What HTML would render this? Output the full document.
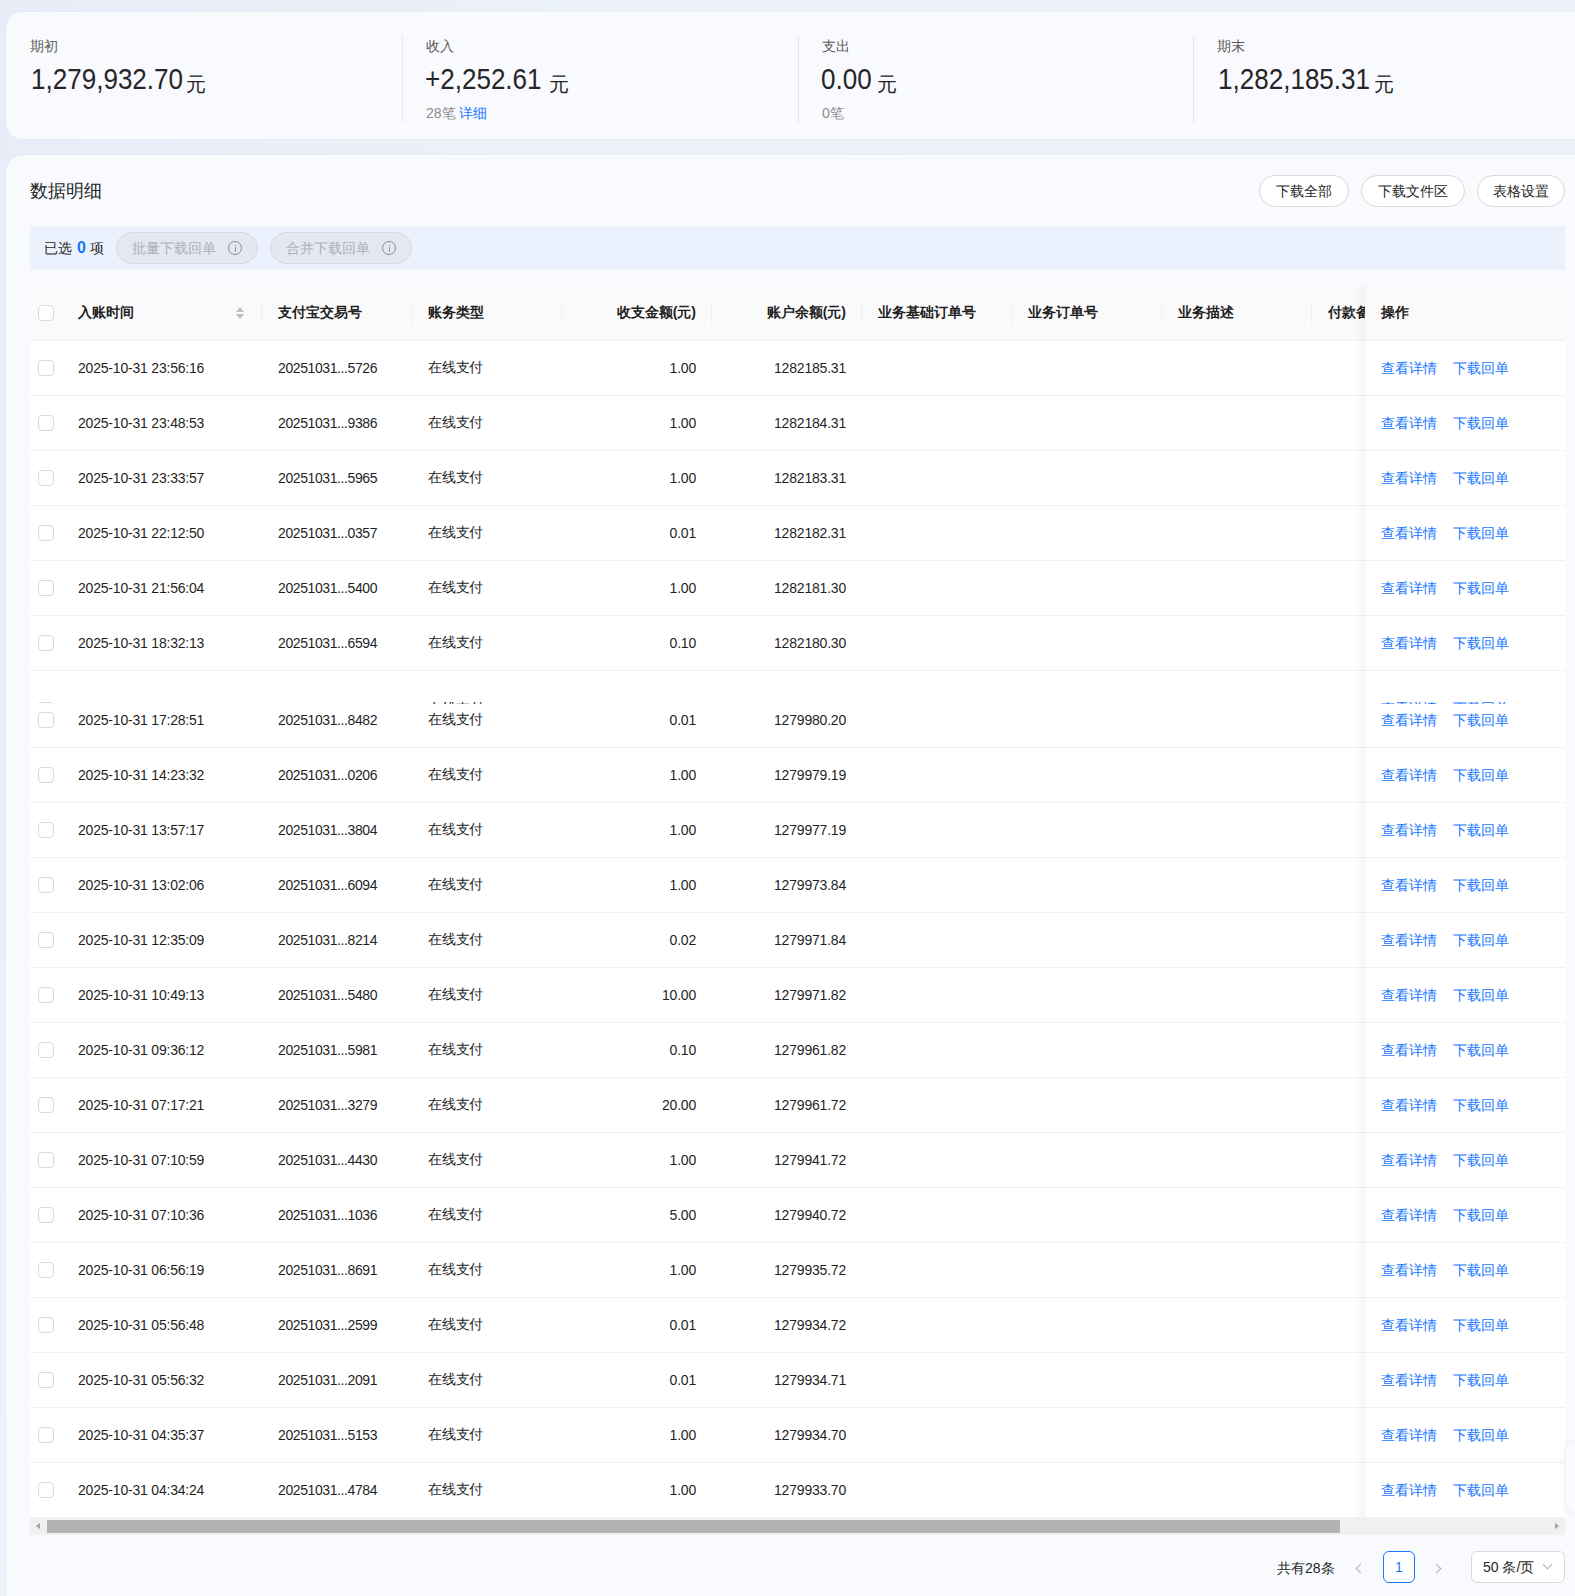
<!DOCTYPE html>
<html><head><meta charset="utf-8">
<style>
*{box-sizing:border-box;margin:0;padding:0}
html,body{width:1575px;height:1596px;overflow:hidden}
body{font-family:"Liberation Sans",sans-serif;color:#1f1f1f;background:linear-gradient(180deg,rgba(238,243,252,0) 0,rgba(238,243,252,0.8) 100%),linear-gradient(90deg,#e9ecf7 0%,#ebf1f8 35%,#edf1f8 65%,#eef0f9 100%);position:relative}
.abs{position:absolute}
.card{position:absolute;left:6px;width:1640px;background:#f9fafe;border-radius:16px;box-shadow:0 0 1px rgba(60,70,120,0.12)}
.card1{top:12px;height:127px}
.card2{top:155px;height:1500px}
.lbl{position:absolute;top:38px;font-size:14px;line-height:16px;color:#595959;white-space:nowrap}
.num{position:absolute;top:62px;font-size:30px;line-height:34px;color:#262626;white-space:nowrap;transform-origin:0 0;transform:scaleX(0.868)}
.yuan{position:absolute;top:73px;font-size:20px;line-height:22px;color:#262626}
.sub{position:absolute;top:105px;font-size:14px;line-height:16px;color:#8c8c8c;white-space:nowrap}
.sub a{color:#1677ff;margin-left:3px}
.vdiv{position:absolute;top:36px;height:87px;width:1px;background:#e8e8e8}
.title{position:absolute;left:30px;top:180px;font-size:18px;line-height:22px;color:#262626}
.btn{position:absolute;top:175px;height:32px;border:1px solid #d9d9d9;border-radius:16px;background:#fff;font-size:14px;line-height:30px;text-align:center;color:#1f1f1f}
.bar{position:absolute;left:30px;top:226px;width:1535px;height:44px;background:#ecf2fd}
.sel{position:absolute;left:44px;top:240px;font-size:14px;line-height:16px;color:#262626;white-space:nowrap}
.sel b{color:#1677ff;font-weight:bold;font-size:16px;margin:0 4px 0 5px}
.pill{position:absolute;top:232px;height:32px;width:142px;border:1px solid #d6d9de;border-radius:16px;background:#e3e8f2;font-size:14px;line-height:30px;color:#acb1bb;padding-left:15px;white-space:nowrap}
.pill i{position:absolute;right:15px;top:8px;width:14px;height:14px;border:1px solid #8f8f8f;border-radius:50%}
.pill i:before{content:"";position:absolute;left:5.5px;top:2.5px;width:1.5px;height:1.5px;background:#8f8f8f}
.pill i:after{content:"";position:absolute;left:5.5px;top:5px;width:1.5px;height:5px;background:#8f8f8f}
.table{position:absolute;left:30px;top:286px;width:1535px;height:1231px;overflow:hidden}
.thead{position:relative;height:55px;background:#fafafa;border-bottom:1px solid #f0f0f0;border-radius:8px 8px 0 0}
.row{position:relative;height:55px;border-bottom:1px solid #f0f0f0;background:#fff}
.row.tall{height:77px}
.cell{position:absolute;top:0;height:54px;display:flex;align-items:center;padding:0 16px;font-size:14px;letter-spacing:-0.2px;white-space:nowrap;overflow:hidden;color:#1f1f1f}
.tall .cell{top:22px}
.thead .cell{font-weight:bold;color:#1f1f1f;letter-spacing:0}
.c-cb{left:0;width:32px;padding:0}
.c-time{left:32px;width:200px}
.c-tx{left:232px;width:150px;letter-spacing:-0.4px}
.c-type{left:382px;width:150px}
.c-amt{left:532px;width:150px;justify-content:flex-end}
.c-bal{left:682px;width:150px;justify-content:flex-end}
.c-e1{left:832px;width:150px}
.c-e2{left:982px;width:150px}
.c-e3{left:1132px;width:150px}
.c-e4{left:1282px;width:150px}
.c-op{left:1335px;width:200px;background:#fff}
.thead .c-op{background:#fafafa}
.c-op a{color:#1677ff;margin-right:16px;position:relative;top:1px}
.c-op{letter-spacing:0}
.shadow{position:absolute;left:1325px;top:0;width:10px;height:1231px;background:linear-gradient(90deg,rgba(0,0,0,0),rgba(0,0,0,0.038));z-index:5}
.tall .c-op{top:0;height:76px;padding-top:22px}
.cb{position:absolute;left:8px;top:19px;width:16px;height:16px;border:1px solid #d9d9d9;border-radius:4px;background:#fff}
.hdiv{position:absolute;top:16px;width:1px;height:22px;background:#f0f0f0}
.sort{position:absolute;left:206px;top:21px;width:8px;height:12px}
.sort:before{content:"";position:absolute;left:0;top:0;border-left:4px solid transparent;border-right:4px solid transparent;border-bottom:5px solid #bfbfbf}
.sort:after{content:"";position:absolute;left:0;top:7px;border-left:4px solid transparent;border-right:4px solid transparent;border-top:5px solid #bfbfbf}
.frag{position:absolute;left:0;top:31px;width:1535px;height:2px;overflow:hidden;z-index:3}
.frag span{position:absolute;top:-2px;font-size:14px;line-height:16px;color:#1f1f1f;white-space:nowrap}
.frag .lk{color:#1677ff}
.scroll{position:absolute;left:30px;top:1517px;width:1535px;height:18px;background:#f0f0f0}
.thumb{position:absolute;left:17px;top:3px;width:1293px;height:13px;background:#b3b3b3}
.arl{position:absolute;left:6px;top:6px;border-top:3.5px solid transparent;border-bottom:3.5px solid transparent;border-right:4px solid #a3a3a3}
.arr{position:absolute;right:6px;top:6px;border-top:3.5px solid transparent;border-bottom:3.5px solid transparent;border-left:4px solid #a3a3a3}
.total{position:absolute;left:1277px;top:1560px;font-size:14px;line-height:16px;color:#1f1f1f;white-space:nowrap}
.page{position:absolute;left:1383px;top:1551px;width:32px;height:32px;border:1px solid #1677ff;border-radius:6px;background:#fff;color:#1677ff;font-size:14px;line-height:30px;text-align:center}
.chev{position:absolute;width:7px;height:7px;border-left:1px solid #b0b0b0;border-bottom:1px solid #b0b0b0}
.select{position:absolute;left:1471px;top:1551px;width:94px;height:32px;border:1px solid #d9d9d9;border-radius:6px;background:#fff;font-size:14px;line-height:30px;padding-left:11px;color:#1f1f1f;white-space:nowrap}
.float{position:absolute;left:1566px;top:1443px;width:40px;height:69px;border-radius:10px;background:#fafbfe;box-shadow:0 0 10px rgba(0,0,0,0.07)}
</style></head><body>
<div class="card card1"></div>
<div class="lbl" style="left:30px">期初</div>
<div class="num" style="left:31px">1,279,932.70</div><div class="yuan" style="left:186px">元</div>
<div class="vdiv" style="left:402px"></div>
<div class="lbl" style="left:426px">收入</div>
<div class="num" style="left:425px">+2,252.61</div><div class="yuan" style="left:549px">元</div>
<div class="sub" style="left:426px">28笔<a>详细</a></div>
<div class="vdiv" style="left:798px"></div>
<div class="lbl" style="left:822px">支出</div>
<div class="num" style="left:821px">0.00</div><div class="yuan" style="left:877px">元</div>
<div class="sub" style="left:822px">0笔</div>
<div class="vdiv" style="left:1193px"></div>
<div class="lbl" style="left:1217px">期末</div>
<div class="num" style="left:1218px">1,282,185.31</div><div class="yuan" style="left:1374px">元</div>

<div class="card card2"></div>
<div class="title">数据明细</div>
<div class="btn" style="left:1259px;width:90px">下载全部</div>
<div class="btn" style="left:1361px;width:104px">下载文件区</div>
<div class="btn" style="left:1477px;width:88px">表格设置</div>
<div class="bar"></div>
<div class="sel">已选<b>0</b>项</div>
<div class="pill" style="left:116px">批量下载回单<i></i></div>
<div class="pill" style="left:270px">合并下载回单<i></i></div>

<div class="table">
<div class="thead">
<div class="cell c-cb"><div class="cb"></div></div>
<div class="cell c-time">入账时间</div><div class="sort"></div><div class="hdiv" style="left:231px"></div>
<div class="cell c-tx">支付宝交易号</div><div class="hdiv" style="left:381px"></div>
<div class="cell c-type">账务类型</div><div class="hdiv" style="left:531px"></div>
<div class="cell c-amt">收支金额(元)</div><div class="hdiv" style="left:681px"></div>
<div class="cell c-bal">账户余额(元)</div><div class="hdiv" style="left:831px"></div>
<div class="cell c-e1">业务基础订单号</div><div class="hdiv" style="left:981px"></div>
<div class="cell c-e2">业务订单号</div><div class="hdiv" style="left:1131px"></div>
<div class="cell c-e3">业务描述</div><div class="hdiv" style="left:1281px"></div>
<div class="cell c-e4">付款备注</div>
<div class="cell c-op">操作</div>
</div>
<div class="row"><div class="cell c-cb"><div class="cb"></div></div><div class="cell c-time">2025-10-31 23:56:16</div><div class="cell c-tx">20251031...5726</div><div class="cell c-type">在线支付</div><div class="cell c-amt">1.00</div><div class="cell c-bal">1282185.31</div><div class="cell c-e1"></div><div class="cell c-e2"></div><div class="cell c-e3"></div><div class="cell c-e4"></div><div class="cell c-op"><a>查看详情</a><a>下载回单</a></div></div>
<div class="row"><div class="cell c-cb"><div class="cb"></div></div><div class="cell c-time">2025-10-31 23:48:53</div><div class="cell c-tx">20251031...9386</div><div class="cell c-type">在线支付</div><div class="cell c-amt">1.00</div><div class="cell c-bal">1282184.31</div><div class="cell c-e1"></div><div class="cell c-e2"></div><div class="cell c-e3"></div><div class="cell c-e4"></div><div class="cell c-op"><a>查看详情</a><a>下载回单</a></div></div>
<div class="row"><div class="cell c-cb"><div class="cb"></div></div><div class="cell c-time">2025-10-31 23:33:57</div><div class="cell c-tx">20251031...5965</div><div class="cell c-type">在线支付</div><div class="cell c-amt">1.00</div><div class="cell c-bal">1282183.31</div><div class="cell c-e1"></div><div class="cell c-e2"></div><div class="cell c-e3"></div><div class="cell c-e4"></div><div class="cell c-op"><a>查看详情</a><a>下载回单</a></div></div>
<div class="row"><div class="cell c-cb"><div class="cb"></div></div><div class="cell c-time">2025-10-31 22:12:50</div><div class="cell c-tx">20251031...0357</div><div class="cell c-type">在线支付</div><div class="cell c-amt">0.01</div><div class="cell c-bal">1282182.31</div><div class="cell c-e1"></div><div class="cell c-e2"></div><div class="cell c-e3"></div><div class="cell c-e4"></div><div class="cell c-op"><a>查看详情</a><a>下载回单</a></div></div>
<div class="row"><div class="cell c-cb"><div class="cb"></div></div><div class="cell c-time">2025-10-31 21:56:04</div><div class="cell c-tx">20251031...5400</div><div class="cell c-type">在线支付</div><div class="cell c-amt">1.00</div><div class="cell c-bal">1282181.30</div><div class="cell c-e1"></div><div class="cell c-e2"></div><div class="cell c-e3"></div><div class="cell c-e4"></div><div class="cell c-op"><a>查看详情</a><a>下载回单</a></div></div>
<div class="row"><div class="cell c-cb"><div class="cb"></div></div><div class="cell c-time">2025-10-31 18:32:13</div><div class="cell c-tx">20251031...6594</div><div class="cell c-type">在线支付</div><div class="cell c-amt">0.10</div><div class="cell c-bal">1282180.30</div><div class="cell c-e1"></div><div class="cell c-e2"></div><div class="cell c-e3"></div><div class="cell c-e4"></div><div class="cell c-op"><a>查看详情</a><a>下载回单</a></div></div>
<div class="row tall"><div class="frag"><div class="cb" style="top:0"></div><span style="left:398px">在线支付</span><span class="lk" style="left:1351px">查看详情</span><span class="lk" style="left:1423px">下载回单</span></div><div class="cell c-cb"><div class="cb"></div></div><div class="cell c-time">2025-10-31 17:28:51</div><div class="cell c-tx">20251031...8482</div><div class="cell c-type">在线支付</div><div class="cell c-amt">0.01</div><div class="cell c-bal">1279980.20</div><div class="cell c-e1"></div><div class="cell c-e2"></div><div class="cell c-e3"></div><div class="cell c-e4"></div><div class="cell c-op"><a>查看详情</a><a>下载回单</a></div></div>
<div class="row"><div class="cell c-cb"><div class="cb"></div></div><div class="cell c-time">2025-10-31 14:23:32</div><div class="cell c-tx">20251031...0206</div><div class="cell c-type">在线支付</div><div class="cell c-amt">1.00</div><div class="cell c-bal">1279979.19</div><div class="cell c-e1"></div><div class="cell c-e2"></div><div class="cell c-e3"></div><div class="cell c-e4"></div><div class="cell c-op"><a>查看详情</a><a>下载回单</a></div></div>
<div class="row"><div class="cell c-cb"><div class="cb"></div></div><div class="cell c-time">2025-10-31 13:57:17</div><div class="cell c-tx">20251031...3804</div><div class="cell c-type">在线支付</div><div class="cell c-amt">1.00</div><div class="cell c-bal">1279977.19</div><div class="cell c-e1"></div><div class="cell c-e2"></div><div class="cell c-e3"></div><div class="cell c-e4"></div><div class="cell c-op"><a>查看详情</a><a>下载回单</a></div></div>
<div class="row"><div class="cell c-cb"><div class="cb"></div></div><div class="cell c-time">2025-10-31 13:02:06</div><div class="cell c-tx">20251031...6094</div><div class="cell c-type">在线支付</div><div class="cell c-amt">1.00</div><div class="cell c-bal">1279973.84</div><div class="cell c-e1"></div><div class="cell c-e2"></div><div class="cell c-e3"></div><div class="cell c-e4"></div><div class="cell c-op"><a>查看详情</a><a>下载回单</a></div></div>
<div class="row"><div class="cell c-cb"><div class="cb"></div></div><div class="cell c-time">2025-10-31 12:35:09</div><div class="cell c-tx">20251031...8214</div><div class="cell c-type">在线支付</div><div class="cell c-amt">0.02</div><div class="cell c-bal">1279971.84</div><div class="cell c-e1"></div><div class="cell c-e2"></div><div class="cell c-e3"></div><div class="cell c-e4"></div><div class="cell c-op"><a>查看详情</a><a>下载回单</a></div></div>
<div class="row"><div class="cell c-cb"><div class="cb"></div></div><div class="cell c-time">2025-10-31 10:49:13</div><div class="cell c-tx">20251031...5480</div><div class="cell c-type">在线支付</div><div class="cell c-amt">10.00</div><div class="cell c-bal">1279971.82</div><div class="cell c-e1"></div><div class="cell c-e2"></div><div class="cell c-e3"></div><div class="cell c-e4"></div><div class="cell c-op"><a>查看详情</a><a>下载回单</a></div></div>
<div class="row"><div class="cell c-cb"><div class="cb"></div></div><div class="cell c-time">2025-10-31 09:36:12</div><div class="cell c-tx">20251031...5981</div><div class="cell c-type">在线支付</div><div class="cell c-amt">0.10</div><div class="cell c-bal">1279961.82</div><div class="cell c-e1"></div><div class="cell c-e2"></div><div class="cell c-e3"></div><div class="cell c-e4"></div><div class="cell c-op"><a>查看详情</a><a>下载回单</a></div></div>
<div class="row"><div class="cell c-cb"><div class="cb"></div></div><div class="cell c-time">2025-10-31 07:17:21</div><div class="cell c-tx">20251031...3279</div><div class="cell c-type">在线支付</div><div class="cell c-amt">20.00</div><div class="cell c-bal">1279961.72</div><div class="cell c-e1"></div><div class="cell c-e2"></div><div class="cell c-e3"></div><div class="cell c-e4"></div><div class="cell c-op"><a>查看详情</a><a>下载回单</a></div></div>
<div class="row"><div class="cell c-cb"><div class="cb"></div></div><div class="cell c-time">2025-10-31 07:10:59</div><div class="cell c-tx">20251031...4430</div><div class="cell c-type">在线支付</div><div class="cell c-amt">1.00</div><div class="cell c-bal">1279941.72</div><div class="cell c-e1"></div><div class="cell c-e2"></div><div class="cell c-e3"></div><div class="cell c-e4"></div><div class="cell c-op"><a>查看详情</a><a>下载回单</a></div></div>
<div class="row"><div class="cell c-cb"><div class="cb"></div></div><div class="cell c-time">2025-10-31 07:10:36</div><div class="cell c-tx">20251031...1036</div><div class="cell c-type">在线支付</div><div class="cell c-amt">5.00</div><div class="cell c-bal">1279940.72</div><div class="cell c-e1"></div><div class="cell c-e2"></div><div class="cell c-e3"></div><div class="cell c-e4"></div><div class="cell c-op"><a>查看详情</a><a>下载回单</a></div></div>
<div class="row"><div class="cell c-cb"><div class="cb"></div></div><div class="cell c-time">2025-10-31 06:56:19</div><div class="cell c-tx">20251031...8691</div><div class="cell c-type">在线支付</div><div class="cell c-amt">1.00</div><div class="cell c-bal">1279935.72</div><div class="cell c-e1"></div><div class="cell c-e2"></div><div class="cell c-e3"></div><div class="cell c-e4"></div><div class="cell c-op"><a>查看详情</a><a>下载回单</a></div></div>
<div class="row"><div class="cell c-cb"><div class="cb"></div></div><div class="cell c-time">2025-10-31 05:56:48</div><div class="cell c-tx">20251031...2599</div><div class="cell c-type">在线支付</div><div class="cell c-amt">0.01</div><div class="cell c-bal">1279934.72</div><div class="cell c-e1"></div><div class="cell c-e2"></div><div class="cell c-e3"></div><div class="cell c-e4"></div><div class="cell c-op"><a>查看详情</a><a>下载回单</a></div></div>
<div class="row"><div class="cell c-cb"><div class="cb"></div></div><div class="cell c-time">2025-10-31 05:56:32</div><div class="cell c-tx">20251031...2091</div><div class="cell c-type">在线支付</div><div class="cell c-amt">0.01</div><div class="cell c-bal">1279934.71</div><div class="cell c-e1"></div><div class="cell c-e2"></div><div class="cell c-e3"></div><div class="cell c-e4"></div><div class="cell c-op"><a>查看详情</a><a>下载回单</a></div></div>
<div class="row"><div class="cell c-cb"><div class="cb"></div></div><div class="cell c-time">2025-10-31 04:35:37</div><div class="cell c-tx">20251031...5153</div><div class="cell c-type">在线支付</div><div class="cell c-amt">1.00</div><div class="cell c-bal">1279934.70</div><div class="cell c-e1"></div><div class="cell c-e2"></div><div class="cell c-e3"></div><div class="cell c-e4"></div><div class="cell c-op"><a>查看详情</a><a>下载回单</a></div></div>
<div class="row"><div class="cell c-cb"><div class="cb"></div></div><div class="cell c-time">2025-10-31 04:34:24</div><div class="cell c-tx">20251031...4784</div><div class="cell c-type">在线支付</div><div class="cell c-amt">1.00</div><div class="cell c-bal">1279933.70</div><div class="cell c-e1"></div><div class="cell c-e2"></div><div class="cell c-e3"></div><div class="cell c-e4"></div><div class="cell c-op"><a>查看详情</a><a>下载回单</a></div></div>
<div class="shadow"></div>
</div>
<div class="scroll"><div class="arl"></div><div class="thumb"></div><div class="arr"></div></div>
<div class="float"></div>
<div class="total">共有28条</div>
<div class="chev" style="left:1357px;top:1565px;transform:rotate(45deg)"></div>
<div class="page">1</div>
<div class="chev" style="left:1433px;top:1565px;transform:rotate(-135deg)"></div>
<div class="select">50 条/页<div class="chev" style="left:72px;top:9px;transform:rotate(-45deg)"></div></div>
</body></html>
